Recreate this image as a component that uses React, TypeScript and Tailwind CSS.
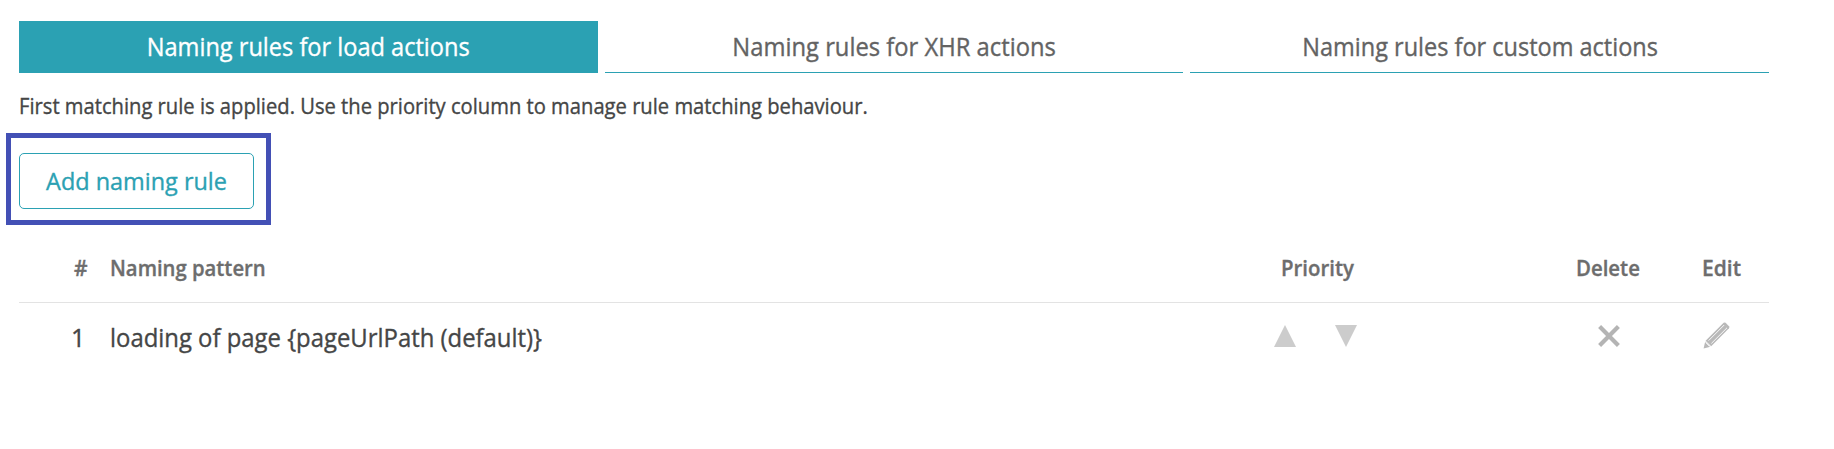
import React from 'react';

function TriangleUp() {
  return (
    <svg width="22" height="22" viewBox="0 0 22 22" className="block">
      <path d="M11 0 L22 22 H0 Z" fill="#cccccc" />
    </svg>
  );
}

function TriangleDown() {
  return (
    <svg width="22" height="22" viewBox="0 0 22 22" className="block">
      <path d="M0 0 H22 L11 22 Z" fill="#cccccc" />
    </svg>
  );
}

function Cross() {
  return (
    <svg width="22" height="22" viewBox="0 0 22 22" className="block">
      <path d="M1.6 1.6 L20.4 20.4 M20.4 1.6 L1.6 20.4" stroke="#b4b4b4" strokeWidth="4.2" fill="none" />
    </svg>
  );
}

function Pencil() {
  return (
    <svg width="27" height="27" viewBox="0 0 27 27" className="block">
      <path d="M0.6 26.4 L2.2 19.6 L7.4 24.8 Z" fill="#b9b9b9" />
      <path d="M2.6 18.8 L20.6 0.8 Q21.6 0 22.6 0.8 L26 4.2 Q26.8 5.2 26 6.2 L8.2 24.2 Z" fill="#b9b9b9" />
      <path d="M5.6 18.6 L21.2 3 M8.4 21.4 L24 5.8" stroke="#ffffff" strokeWidth="0.9" fill="none" />
      <path d="M2.4 20.4 L6.6 24.6" stroke="#ffffff" strokeWidth="0.7" fill="none" />
    </svg>
  );
}

export default function App() {
  return (
    <div className="h-[449px] w-[1834px] overflow-hidden bg-white pt-[21px] font-['Open_Sans',sans-serif] text-[#454646] [-webkit-text-stroke:0.35px]">
      <div className="ml-[19px] grid h-[52px] w-[1750px] grid-cols-3 gap-[7px] text-center text-[25px] leading-[50px] text-[#636363]">
        <div className="bg-[#2ba1b3] text-white">
          <span className="inline-block scale-x-[0.943]">Naming rules for load actions</span>
        </div>
        <div className="border-b border-[#2ba1b3]">
          <span className="inline-block scale-x-[0.951]">Naming rules for XHR actions</span>
        </div>
        <div className="border-b border-[#2ba1b3]">
          <span className="inline-block scale-x-[0.94]">Naming rules for custom actions</span>
        </div>
      </div>

      <p className="mt-[18px] ml-[19px] w-max origin-left scale-x-[0.961] text-[21px] leading-[30px] whitespace-nowrap">
        First matching rule is applied. Use the priority column to manage rule matching behaviour.
      </p>

      <div className="mt-3 ml-1.5 h-[92px] w-[265px] border-5 border-[#4350b5] pt-[15px] pl-2">
        <button className="flex h-14 w-[235px] items-start justify-center rounded-[5px] border border-[#2ba1b3] bg-white text-[24.5px] leading-[54px] whitespace-nowrap text-[#2ba1b3]">
          <span className="inline-block scale-x-[0.957]">Add naming rule</span>
        </button>
      </div>

      <div className="ml-[19px] w-[1750px]">
        <div className="grid h-[78px] grid-cols-[55px_36px_1171px_295px_126px_67px] border-b border-[#e3e3e3] pt-7 text-[21px] leading-[30px] font-semibold whitespace-nowrap text-[#6d6d6d]">
          <span className="col-start-2 w-max">#</span>
          <span className="w-max origin-left scale-x-[0.965]">Naming pattern</span>
          <span className="w-max origin-left scale-x-[0.97]">Priority</span>
          <span className="w-max origin-left scale-x-[0.97]">Delete</span>
          <span className="w-max origin-left">Edit</span>
        </div>
        <div className="grid grid-cols-[91px_1164px_324px_105px_66px] pt-4 text-[25px] leading-9 whitespace-nowrap">
          <span className="pl-[52px]">1</span>
          <span className="w-max origin-left scale-x-[0.955]">loading of page {'{pageUrlPath (default)}'}</span>
          <div className="flex gap-[39px] pt-1.5">
            <TriangleUp />
            <TriangleDown />
          </div>
          <div className="pt-1.5">
            <Cross />
          </div>
          <div className="pt-[3px]">
            <Pencil />
          </div>
        </div>
      </div>
    </div>
  );
}
